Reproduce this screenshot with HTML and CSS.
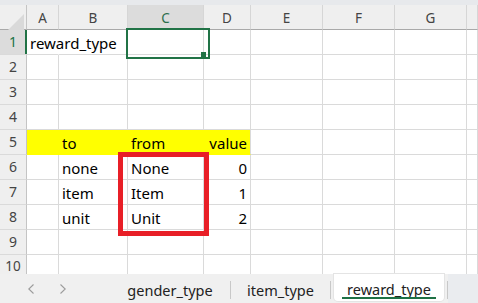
FILE: index.html
```
<!DOCTYPE html>
<html>
<head>
<meta charset="utf-8">
<link rel="stylesheet" href="styles.css">
</head>
<body>
<div class="app">
  <div class="topstrip"></div>
  <div class="sheet">
    <div class="h corner"></div>
    <div class="h">A</div>
    <div class="h">B</div>
    <div class="h hsel">C</div>
    <div class="h">D</div>
    <div class="h">E</div>
    <div class="h">F</div>
    <div class="h">G</div>
    <div class="h"></div>

    <div class="r rsel">1</div>
    <div class="c nob">reward_type</div>
    <div class="c"></div>
    <div class="c sel"></div>
    <div class="c"></div><div class="c"></div><div class="c"></div><div class="c"></div><div class="c"></div>

    <div class="r">2</div>
    <div class="c"></div><div class="c"></div><div class="c"></div><div class="c"></div><div class="c"></div><div class="c"></div><div class="c"></div><div class="c"></div>

    <div class="r">3</div>
    <div class="c"></div><div class="c"></div><div class="c"></div><div class="c"></div><div class="c"></div><div class="c"></div><div class="c"></div><div class="c"></div>

    <div class="r">4</div>
    <div class="c"></div><div class="c"></div><div class="c"></div><div class="c"></div><div class="c"></div><div class="c"></div><div class="c"></div><div class="c"></div>

    <div class="r">5</div>
    <div class="c y"></div>
    <div class="c y">to</div>
    <div class="c y">from</div>
    <div class="c y yl num">value</div>
    <div class="c"></div><div class="c"></div><div class="c"></div><div class="c"></div>

    <div class="r">6</div>
    <div class="c"></div>
    <div class="c">none</div>
    <div class="c">None</div>
    <div class="c num">0</div>
    <div class="c"></div><div class="c"></div><div class="c"></div><div class="c"></div>

    <div class="r">7</div>
    <div class="c"></div>
    <div class="c">item</div>
    <div class="c">Item</div>
    <div class="c num">1</div>
    <div class="c"></div><div class="c"></div><div class="c"></div><div class="c"></div>

    <div class="r">8</div>
    <div class="c"></div>
    <div class="c">unit</div>
    <div class="c">Unit</div>
    <div class="c num">2</div>
    <div class="c"></div><div class="c"></div><div class="c"></div><div class="c"></div>

    <div class="r">9</div>
    <div class="c"></div><div class="c"></div><div class="c"></div><div class="c"></div><div class="c"></div><div class="c"></div><div class="c"></div><div class="c"></div>

    <div class="r r10">10</div>
    <div class="c"></div><div class="c"></div><div class="c"></div><div class="c"></div><div class="c"></div><div class="c"></div><div class="c"></div><div class="c"></div>

    <div class="redbox"></div>
  </div>
  <div class="tabbar">
    <div class="nav">
      <svg class="arrow" width="6" height="10" viewBox="0 0 6 10"><path d="M5.5 0.5 L0.8 5 L5.5 9.5" fill="none" stroke="#9c9c9c" stroke-width="1.1"/></svg>
      <svg class="arrow" width="6" height="10" viewBox="0 0 6 10"><path d="M0.5 0.5 L5.2 5 L0.5 9.5" fill="none" stroke="#9c9c9c" stroke-width="1.1"/></svg>
    </div>
    <div class="tab t1">gender_type</div>
    <span class="sep"></span>
    <div class="tab t2">item_type</div>
    <span class="sep"></span>
    <div class="tab active">reward_type</div>
    <span class="sep"></span>
    <div class="rest"></div>
  </div>
</div>
</body>
</html>
```
FILE: styles.css
```
* { box-sizing: border-box; margin: 0; padding: 0; }
body { width: 478px; height: 303px; overflow: hidden; background: #fff; font-family: "Noto Sans", sans-serif; }
.app { display: flex; flex-direction: column; height: 303px; }
.topstrip { height: 5px; background: #e7e9ec; flex: none; }
.sheet {
  position: relative;
  height: 269px;
  flex: none;
  overflow: hidden;
  display: grid;
  grid-template-columns: 27px 32px 69px 76px 47px 72px 72px 72px 1fr;
  grid-auto-rows: 25px;
}
.h {
  background: #efefef;
  border-right: 1px solid #d6d6d6;
  border-bottom: 1px solid #a9a9a9;
  display: flex; align-items: center; justify-content: center;
  color: #444; font-size: 13.5px; padding-top: 1px;
}
.corner { position: relative; border-right-color: #c4c4c4; }
.corner::after {
  content: ""; position: absolute; left: 7px; top: 9px; width: 17px; height: 17px;
  background: #d9d9d9; clip-path: polygon(100% 0, 100% 100%, 0 100%);
}
.hsel { background: #dcdcdc; color: #2b6e4c; }
.r {
  background: #efefef;
  border-right: 1px solid #c4c4c4;
  border-bottom: 1px solid #dadada;
  display: flex; align-items: center; justify-content: center;
  color: #444; font-size: 14px; padding-bottom: 1px;
}
.r10 { align-items: flex-start; padding: 2px 0 0 0; font-size: 13.5px; }
.rsel { background: #dcdcdc; color: #217346; position: relative; }
.rsel::after { content: ""; position: absolute; right: -1px; top: 0; bottom: 0; width: 2px; background: #217346; }
.c {
  border-right: 1px solid #dadada;
  border-bottom: 1px solid #dadada;
  display: flex; align-items: center;
  padding: 2px 3px 0 3px;
  font-size: 15px; color: #000;
  white-space: nowrap;
}
.nob { border-right-color: transparent; }
.num { justify-content: flex-end; }
.y { background: #ffff00; border-right-color: #ffff00; border-bottom-color: #ffff00; }
.yl { border-right-color: #dadada; }
.sel { position: relative; }
.sel::after {
  content: ""; position: absolute; left: -2px; top: -2px; width: 80px; height: 27px;
  border: 2px solid #217346;
}
.sel::before {
  content: ""; position: absolute; left: 73px; top: 22px; width: 5px; height: 5px;
  background: #217346; z-index: 1;
}
.redbox {
  position: absolute; left: 118px; top: 147px; width: 91px; height: 84px;
  border: 5px solid #e81f27;
}
.tabbar { height: 29px; flex: none; background: #f0f0f0; display: flex; align-items: stretch; }
.nav { width: 110px; display: flex; align-items: center; padding-left: 28px; gap: 26px; padding-top: 1px; }
.tab {
  display: flex; align-items: center; justify-content: center;
  font-size: 14.5px; color: #222; padding-top: 2px;
}
.t1 { width: 120px; }
.t2 { width: 99px; }
.sep { width: 1px; height: 18px; align-self: center; background: #c8c8c8; margin-top: 2px; }
.active {
  width: 110px; margin: 0 3px 2px 3px; background: #fff;
  border-radius: 0 0 4px 4px; position: relative;
  box-shadow: 0 0 0 1px #e4e4e4;
}
.active::after { content: ""; position: absolute; left: 8px; right: 8px; bottom: 2px; height: 2px; background: #1e7145; }
.rest { flex: 1; background: #eaecef; }
```
